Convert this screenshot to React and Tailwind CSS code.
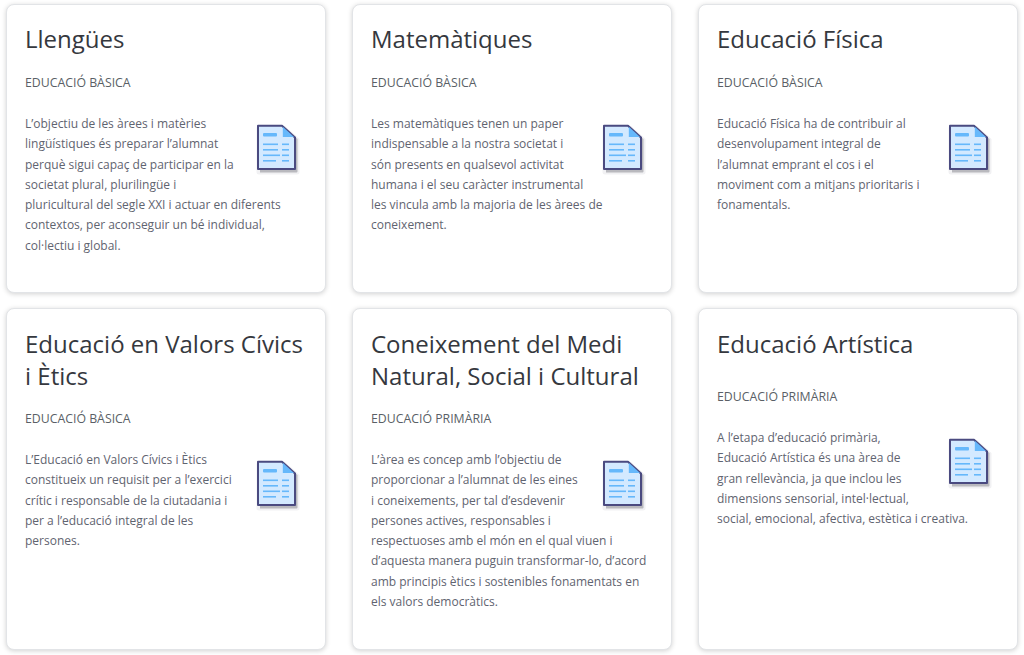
const cards = [
  { t: ["Llengües"], c: "EDUCACIÓ BÀSICA", pt: "pt-[18px]", m: "mt-[18px]", b: ["L’objectiu de les àrees i matèries", "lingüístiques és preparar l’alumnat", "perquè sigui capaç de participar en la", "societat plural, plurilingüe i", "pluricultural del segle XXI i actuar en diferents", "contextos, per aconseguir un bé individual,", "col·lectiu i global."] },
  { t: ["Matemàtiques"], c: "EDUCACIÓ BÀSICA", pt: "pt-[18px]", m: "mt-[18px]", b: ["Les matemàtiques tenen un paper", "indispensable a la nostra societat i", "són presents en qualsevol activitat", "humana i el seu caràcter instrumental", "les vincula amb la majoria de les àrees de", "coneixement."] },
  { t: ["Educació Física"], c: "EDUCACIÓ BÀSICA", pt: "pt-[18px]", m: "mt-[18px]", b: ["Educació Física ha de contribuir al", "desenvolupament integral de", "l’alumnat emprant el cos i el", "moviment com a mitjans prioritaris i", "fonamentals."] },
  { t: ["Educació en Valors Cívics", "i Ètics"], c: "EDUCACIÓ BÀSICA", pt: "pt-[19px]", m: "mt-[17px]", b: ["L’Educació en Valors Cívics i Ètics", "constitueix un requisit per a l’exercici", "crític i responsable de la ciutadania i", "per a l’educació integral de les", "persones."] },
  { t: ["Coneixement del Medi", "Natural, Social i Cultural"], c: "EDUCACIÓ PRIMÀRIA", pt: "pt-[19px]", m: "mt-[17px]", b: ["L’àrea es concep amb l’objectiu de", "proporcionar a l’alumnat de les eines", "i coneixements, per tal d’esdevenir", "persones actives, responsables i", "respectuoses amb el món en el qual viuen i", "d’aquesta manera puguin transformar-lo, d’acord", "amb principis ètics i sostenibles fonamentats en", "els valors democràtics."] },
  { t: ["Educació Artística"], c: "EDUCACIÓ PRIMÀRIA", pt: "pt-[19px]", m: "mt-[27px]", b: ["A l’etapa d’educació primària,", "Educació Artística és una àrea de", "gran rellevància, ja que inclou les", "dimensions sensorial, intel·lectual,", "social, emocional, afectiva, estètica i creativa."] },
];

function DocIcon() {
  return (
    <svg width="46" height="54" viewBox="0 0 46 54" className="float-right ml-2 mr-[24px] mt-[10px]">
      <path d="M1.5 4.5Q1.5 2 4 2H30L44.5 15V48Q44.5 50.5 42 50.5H4Q1.5 50.5 1.5 48Z" fill="#f1f1f3" />
      <path d="M5 4H29L42.5 15V47.5Q42.5 48.5 41.5 48.5H5Z" fill="#b9b9be" />
      <path d="M3 1.8H27L40 13.5V45H3Z" fill="#d3e9ff" stroke="#4a4a80" strokeWidth="2" strokeLinejoin="round" />
      <path d="M27.8 2.8L39 13H27.8Z" fill="#66b8fb" />
      <rect x="8" y="9" width="14" height="3.4" rx="1" fill="#66b8fb" />
      <rect x="8" y="19.5" width="15" height="1.6" fill="#66b8fb" />
      <rect x="27" y="19.5" width="7" height="1.6" fill="#66b8fb" />
      <rect x="8" y="25" width="15" height="1.6" fill="#66b8fb" />
      <rect x="27" y="25" width="7" height="1.6" fill="#66b8fb" />
      <rect x="8" y="30.5" width="17" height="1.6" fill="#66b8fb" />
      <rect x="27" y="30.5" width="7" height="1.6" fill="#66b8fb" />
      <rect x="8" y="36" width="13" height="1.6" fill="#66b8fb" />
      <rect x="27" y="36" width="7" height="1.6" fill="#66b8fb" />
    </svg>
  );
}

function Card({ card }) {
  return (
    <div className={`bg-white rounded-[8px] border border-[#e2e4e7] shadow-[0_1px_5px_rgba(0,0,0,0.18)] pl-[18px] overflow-hidden ${card.pt}`}>
      <h2 className="text-[24px] leading-[32px] text-[#35383e] whitespace-nowrap">
        {card.t.map((l) => <div key={l}>{l}</div>)}
      </h2>
      <div className={`${card.m} text-[12.3px] leading-[20px] text-[#5a5f66] whitespace-nowrap`}>{card.c}</div>
      <div className="mt-[21px] text-[12px] leading-[20.3px] text-[#5f6470]">
        <DocIcon />
        {card.b.map((l) => <div key={l} className="whitespace-nowrap">{l}</div>)}
      </div>
    </div>
  );
}

export default function App() {
  return (
    <div className="w-[1024px] h-[655px] overflow-hidden bg-white px-[6px] pt-[4px] font-['Open_Sans','Liberation_Sans',sans-serif]">
      <div className="grid grid-cols-[320px_320px_320px] grid-rows-[289px_342px] gap-x-[26px] gap-y-[15px]">
        {cards.map((c) => <Card key={c.c + c.t[0]} card={c} />)}
      </div>
    </div>
  );
}
